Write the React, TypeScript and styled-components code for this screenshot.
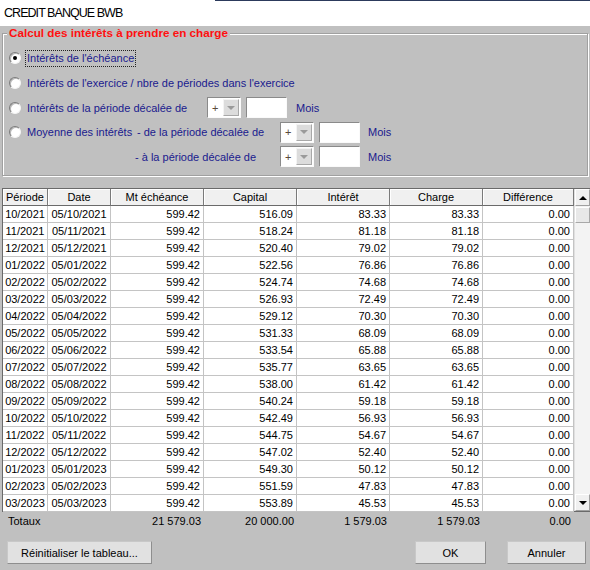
import React from "react";
import styled, { createGlobalStyle } from "styled-components";

const GlobalStyle = createGlobalStyle`
  html, body { margin: 0; padding: 0; }
  body {
    width: 590px;
    height: 570px;
    overflow: hidden;
    background: #c0c0c0;
    font-family: "Liberation Sans", Arial, sans-serif;
  }
  * { box-sizing: border-box; }
`;

type Row = [string, string, string, string, string];

const data: Row[] = [
  ["10/2021", "05/10/2021", "599.42", "516.09", "83.33"],
  ["11/2021", "05/11/2021", "599.42", "518.24", "81.18"],
  ["12/2021", "05/12/2021", "599.42", "520.40", "79.02"],
  ["01/2022", "05/01/2022", "599.42", "522.56", "76.86"],
  ["02/2022", "05/02/2022", "599.42", "524.74", "74.68"],
  ["03/2022", "05/03/2022", "599.42", "526.93", "72.49"],
  ["04/2022", "05/04/2022", "599.42", "529.12", "70.30"],
  ["05/2022", "05/05/2022", "599.42", "531.33", "68.09"],
  ["06/2022", "05/06/2022", "599.42", "533.54", "65.88"],
  ["07/2022", "05/07/2022", "599.42", "535.77", "63.65"],
  ["08/2022", "05/08/2022", "599.42", "538.00", "61.42"],
  ["09/2022", "05/09/2022", "599.42", "540.24", "59.18"],
  ["10/2022", "05/10/2022", "599.42", "542.49", "56.93"],
  ["11/2022", "05/11/2022", "599.42", "544.75", "54.67"],
  ["12/2022", "05/12/2022", "599.42", "547.02", "52.40"],
  ["01/2023", "05/01/2023", "599.42", "549.30", "50.12"],
  ["02/2023", "05/02/2023", "599.42", "551.59", "47.83"],
  ["03/2023", "05/03/2023", "599.42", "553.89", "45.53"],
];

const COLS = "45px 63px 93px 93px 93px 93px 91px";

const Window = styled.div`
  width: 590px;
  height: 570px;
  display: flex;
  flex-direction: column;
  background: #c0c0c0;
  overflow: hidden;
`;

const TitleBar = styled.div`
  position: relative;
  height: 26px;
  flex: none;
  background: #fff;
  display: flex;
  align-items: center;
  padding-left: 4px;
  font-size: 12.5px;
  letter-spacing: -0.95px;
  color: #000;
  &::before {
    content: "";
    position: absolute;
    top: 0;
    left: 215px;
    right: 0;
    height: 1px;
    background: #2c3a5c;
  }
`;

const Content = styled.div`
  flex: 1;
  display: flex;
  flex-direction: column;
  padding: 0 0 0 2px;
`;

const GroupBox = styled.fieldset`
  margin: 0 2px 0 0;
  padding: 6px 0 6px 0;
  min-width: 0;
  border: 1px solid #a0a0a0;
  box-shadow: inset 1px 1px 0 #fff, 1px 1px 0 #fff;
  display: flex;
  flex-direction: column;
`;

const Legend = styled.legend`
  margin-left: 4px;
  padding: 0 2px;
  height: 14px;
  line-height: 14px;
  background: #c0c0c0;
  color: #ff1010;
  font-weight: bold;
  font-size: 11.7px;
`;

const OptionRow = styled.div<{ $h: number; $indent?: number }>`
  height: ${(p) => p.$h}px;
  display: flex;
  align-items: center;
  padding-left: ${(p) => p.$indent ?? 6}px;
  font-size: 11px;
  color: #1a1a8e;
`;

const Radio = styled.span<{ $checked?: boolean }>`
  width: 12px;
  height: 12px;
  flex: none;
  border-radius: 50%;
  background: #fff;
  border: 1px solid;
  border-color: #7a7a7a #f4f4f4 #f4f4f4 #7a7a7a;
  box-shadow: inset 1px 1px 0 #b8b8b8;
  margin-right: 4px;
  display: flex;
  align-items: center;
  justify-content: center;
  &::after {
    content: "";
    width: 4px;
    height: 4px;
    border-radius: 50%;
    background: #000;
    display: ${(p) => (p.$checked ? "block" : "none")};
  }
`;

const OptionLabel = styled.span<{ $width?: number; $focus?: boolean }>`
  display: inline-flex;
  align-items: center;
  height: 17px;
  padding: 0 1px;
  white-space: nowrap;
  width: ${(p) => (p.$width ? `${p.$width}px` : "auto")};
  border: 1px dotted ${(p) => (p.$focus ? "#222" : "transparent")};
  flex: none;
`;

const Combo = styled.div`
  width: 34px;
  height: 21px;
  flex: none;
  display: flex;
  background: #fff;
  border: 1px solid;
  border-color: #8a8a8a #fafafa #fafafa #8a8a8a;
  padding: 1px;
`;

const ComboValue = styled.span`
  flex: 1;
  display: flex;
  align-items: center;
  padding-left: 3px;
  font-size: 11px;
  color: #5a4a3a;
`;

const ComboButton = styled.span`
  width: 16px;
  flex: none;
  background: #dcdcdc;
  border: 1px solid;
  border-color: #f4f4f4 #a8a8a8 #a8a8a8 #f4f4f4;
  display: flex;
  align-items: center;
  justify-content: center;
  &::after {
    content: "";
    border-left: 4px solid transparent;
    border-right: 4px solid transparent;
    border-top: 4px solid #9a9a9a;
  }
`;

const TextBox = styled.div`
  width: 41px;
  height: 21px;
  flex: none;
  margin-left: 5px;
  background: #fff;
  border: 1px solid;
  border-color: #8a8a8a #fafafa #fafafa #8a8a8a;
`;

const Unit = styled.span<{ $gap: number }>`
  margin-left: ${(p) => p.$gap}px;
  font-size: 11px;
  color: #1a1a8e;
`;

const TableFrame = styled.div`
  margin-top: 12px;
  height: 324px;
  display: flex;
  border: 1px solid #6a6a6a;
  border-right: none;
  background: #fff;
`;

const Grid = styled.div`
  display: grid;
  grid-template-columns: ${COLS};
  grid-auto-rows: 17px;
  align-content: start;
  font-size: 11px;
  color: #000;
`;

const HeadCell = styled.div`
  background: #f0f0f0;
  border-right: 1px solid #7a7a7a;
  border-bottom: 1px solid #6a6a6a;
  box-shadow: inset 1px 1px 0 #fff;
  display: flex;
  align-items: center;
  justify-content: center;
  white-space: nowrap;
`;

const Cell = styled.div<{ $align: "center" | "right" }>`
  border-right: 1px solid #c4c4c4;
  border-bottom: 1px solid #c4c4c4;
  display: flex;
  align-items: center;
  justify-content: ${(p) => (p.$align === "right" ? "flex-end" : "center")};
  padding: 0 3px;
  white-space: nowrap;
`;

const ScrollBar = styled.div`
  width: 16px;
  flex: none;
  display: flex;
  flex-direction: column;
  background: #f3f3f3;
  border-left: 1px solid #e0e0e0;
`;

const ScrollButton = styled.div<{ $dir: "up" | "down" }>`
  height: 17px;
  flex: none;
  background: #f0f0f0;
  border: 1px solid;
  border-color: #fff #a0a0a0 #a0a0a0 #fff;
  display: flex;
  align-items: center;
  justify-content: center;
  margin-top: ${(p) => (p.$dir === "down" ? "auto" : "0")};
  &::after {
    content: "";
    border-left: 4px solid transparent;
    border-right: 4px solid transparent;
    ${(p) =>
      p.$dir === "up"
        ? "border-bottom: 4px solid #000;"
        : "border-top: 4px solid #000;"}
  }
`;

const Thumb = styled.div`
  height: 16px;
  flex: none;
  margin-top: 1px;
  background: #e8e8e8;
  border: 1px solid;
  border-color: #fff #a8a8a8 #a8a8a8 #fff;
`;

const TotalsRow = styled.div`
  display: grid;
  grid-template-columns: ${COLS};
  height: 18px;
  padding-left: 1px;
  font-size: 11px;
  color: #000;
`;

const TotalCell = styled.div<{ $span?: number; $align: "left" | "right" }>`
  grid-column: span ${(p) => p.$span ?? 1};
  display: flex;
  align-items: center;
  justify-content: ${(p) => (p.$align === "right" ? "flex-end" : "flex-start")};
  padding: ${(p) => (p.$align === "right" ? "0 3px 0 0" : "0 0 0 5px")};
`;

const ButtonBar = styled.div`
  margin-top: 11px;
  display: flex;
  justify-content: space-between;
  padding: 0 4px 0 5px;
`;

const ButtonGroup = styled.div`
  display: flex;
  gap: 21px;
`;

const Button = styled.button<{ $w: number }>`
  width: ${(p) => p.$w}px;
  height: 23px;
  background: #e1e1e1;
  border: 1px solid;
  border-color: #c8c8c8 #8e8e8e #8e8e8e #c8c8c8;
  font-family: "Liberation Sans", Arial, sans-serif;
  font-size: 11px;
  color: #000;
  padding: 0;
`;

const headers = ["Période", "Date", "Mt échéance", "Capital", "Intérêt", "Charge", "Différence"];

const OffsetInputs: React.FC<{ unitGap: number }> = ({ unitGap }) => (
  <>
    <Combo>
      <ComboValue>+</ComboValue>
      <ComboButton />
    </Combo>
    <TextBox />
    <Unit $gap={unitGap}>Mois</Unit>
  </>
);

export default function App() {
  return (
    <>
      <GlobalStyle />
      <Window>
        <TitleBar>CREDIT BANQUE BWB</TitleBar>
        <Content>
          <GroupBox>
            <Legend>Calcul des intérêts à prendre en charge</Legend>
            <OptionRow $h={24}>
              <Radio $checked />
              <OptionLabel $focus>Intérêts de l'échéance</OptionLabel>
            </OptionRow>
            <OptionRow $h={25}>
              <Radio />
              <OptionLabel>Intérêts de l'exercice / nbre de périodes dans l'exercice</OptionLabel>
            </OptionRow>
            <OptionRow $h={25}>
              <Radio />
              <OptionLabel $width={182}>Intérêts de la période décalée de</OptionLabel>
              <OffsetInputs unitGap={9} />
            </OptionRow>
            <OptionRow $h={24}>
              <Radio />
              <OptionLabel $width={110}>Moyenne des intérêts</OptionLabel>
              <OptionLabel $width={145}>- de la période décalée de</OptionLabel>
              <OffsetInputs unitGap={8} />
            </OptionRow>
            <OptionRow $h={25} $indent={130}>
              <OptionLabel $width={147}>- à la période décalée de</OptionLabel>
              <OffsetInputs unitGap={8} />
            </OptionRow>
          </GroupBox>

          <TableFrame>
            <Grid>
              {headers.map((h) => (
                <HeadCell key={h}>{h}</HeadCell>
              ))}
              {data.map((r) => (
                <React.Fragment key={r[0]}>
                  <Cell $align="center">{r[0]}</Cell>
                  <Cell $align="center">{r[1]}</Cell>
                  <Cell $align="right">{r[2]}</Cell>
                  <Cell $align="right">{r[3]}</Cell>
                  <Cell $align="right">{r[4]}</Cell>
                  <Cell $align="right">{r[4]}</Cell>
                  <Cell $align="right">0.00</Cell>
                </React.Fragment>
              ))}
            </Grid>
            <ScrollBar>
              <ScrollButton $dir="up" />
              <Thumb />
              <ScrollButton $dir="down" />
            </ScrollBar>
          </TableFrame>

          <TotalsRow>
            <TotalCell $span={2} $align="left">Totaux</TotalCell>
            <TotalCell $align="right">21 579.03</TotalCell>
            <TotalCell $align="right">20 000.00</TotalCell>
            <TotalCell $align="right">1 579.03</TotalCell>
            <TotalCell $align="right">1 579.03</TotalCell>
            <TotalCell $align="right">0.00</TotalCell>
          </TotalsRow>

          <ButtonBar>
            <Button $w={145}>Réinitialiser le tableau...</Button>
            <ButtonGroup>
              <Button $w={71}>OK</Button>
              <Button $w={79}>Annuler</Button>
            </ButtonGroup>
          </ButtonBar>
        </Content>
      </Window>
    </>
  );
}
